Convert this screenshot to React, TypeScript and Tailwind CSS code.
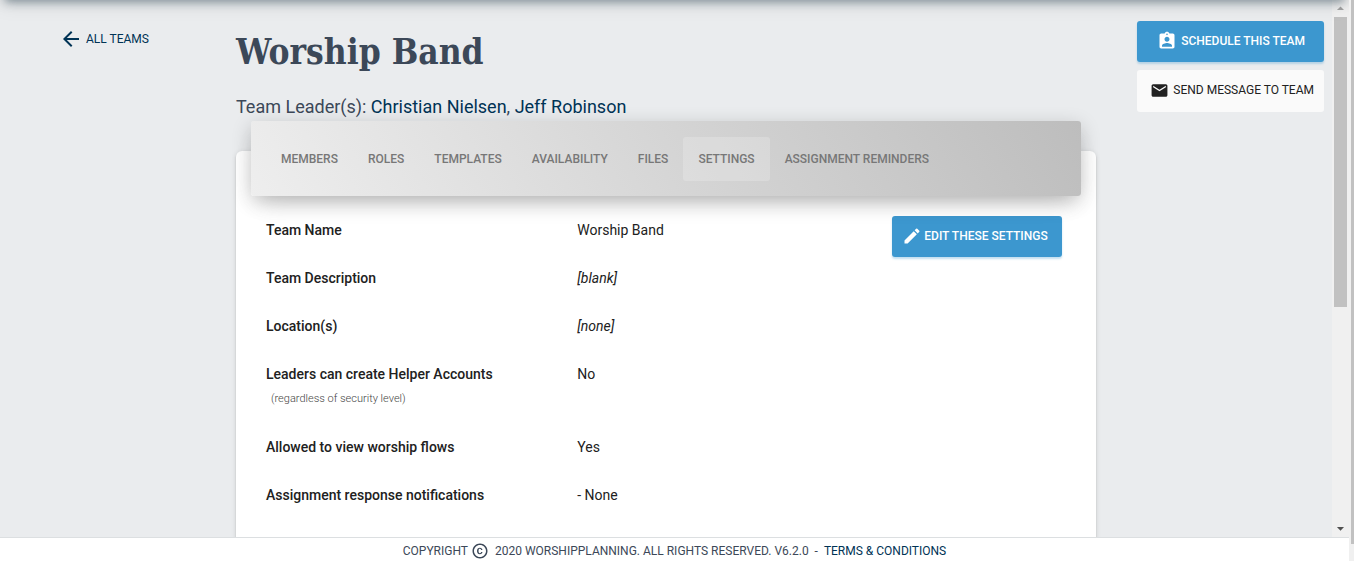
import React from 'react';
import {
  MdArrowBack,
  MdArrowDropDown,
  MdArrowDropUp,
  MdAssignmentInd,
  MdCopyright,
  MdCreate,
  MdEmail,
} from 'react-icons/md';

interface Setting {
  label: string;
  value: string;
  note?: string;
  isEmpty?: boolean;
}

const tabs = ['Members', 'Roles', 'Templates', 'Availability', 'Files', 'Settings', 'Assignment Reminders'];

const settings: Setting[] = [
  { label: 'Team Name', value: 'Worship Band' },
  { label: 'Team Description', value: '[blank]', isEmpty: true },
  { label: 'Location(s)', value: '[none]', isEmpty: true },
  { label: 'Leaders can create Helper Accounts', value: 'No', note: '(regardless of security level)' },
  { label: 'Allowed to view worship flows', value: 'Yes' },
  { label: 'Assignment response notifications', value: '- None' },
];

function TeamTabs({ active }: { active: string }) {
  return (
    <nav className="relative mx-[15px] -mt-[30px] mb-[10px] flex rounded-[3px] bg-linear-[60deg,#eeeeee,#bdbdbd] px-[15px] pt-4 pb-[15px] shadow-[0_5px_20px_0_rgba(0,0,0,0.2),0_13px_24px_-11px_rgba(100,100,100,0.3)]">
      {tabs.map(tab => (
        <a
          key={tab}
          href="#"
          className={`rounded-[3px] px-[15px] text-xs leading-[44px] font-medium whitespace-nowrap text-[#777777] uppercase ${
            tab === active ? 'bg-white/20' : ''
          }`}
        >
          {tab}
        </a>
      ))}
    </nav>
  );
}

function SettingRow({ label, value, note, isEmpty }: Setting) {
  return (
    <div className="grid grid-cols-2 py-3 text-sm leading-6 text-[#212121]">
      <dt className="px-[15px] font-medium whitespace-nowrap">
        {label}
        {note && <small className="block pl-[5px] text-[11px] leading-[25px] font-light text-[#444444]">{note}</small>}
      </dt>
      <dd className={`px-[15px] ${isEmpty ? 'italic' : ''}`}>{value}</dd>
    </div>
  );
}

function ScrollTrack() {
  return (
    <div className="flex w-[17px] shrink-0 flex-col items-center bg-[#f0f0f0]" aria-hidden="true">
      <MdArrowDropUp className="h-[17px] w-[17px] shrink-0 text-[#a3a3a3]" />
      <div className="h-[54%] w-[13px] bg-[#c1c1c1]" />
      <MdArrowDropDown className="mt-auto h-[17px] w-[17px] shrink-0 text-[#505050]" />
    </div>
  );
}

export default function App() {
  return (
    <div className="flex h-screen overflow-hidden bg-[#f0f0f0] font-['Roboto',sans-serif]">
      <div className="flex min-w-0 flex-1 flex-col">
        <div className="relative flex min-h-0 flex-1 overflow-hidden">
          {/* shadow cast by the site header */}
          <div className="absolute inset-x-0 -top-10 h-10 shadow-[0_4px_20px_0_rgba(0,0,0,0.1),0_7px_10px_-5px_rgba(60,85,100,0.55)]" />

          <main className="grid min-w-0 flex-1 grid-cols-[1fr_4fr_1fr] items-start bg-[#eaecee]">
            <div className="pt-[27px] pl-[59px]">
              <a href="#" className="flex items-center gap-[3px] text-xs leading-6 whitespace-nowrap text-[#003355] uppercase">
                <MdArrowBack className="h-6 w-6" />
                All Teams
              </a>
            </div>

            <div className="px-[14px]">
              <h1 className="pt-[31px] font-['Roboto_Slab','DejaVu_Serif_Condensed','DejaVu_Serif',serif] text-[35px] leading-[42px] font-bold whitespace-nowrap text-[#3c4858]">
                Worship Band
              </h1>
              <p className="mt-5 text-lg leading-7 text-[#3c4858]">
                Team Leader(s):{' '}
                <a href="#" className="text-[#003355]">Christian Nielsen</a>,{' '}
                <a href="#" className="text-[#003355]">Jeff Robinson</a>
              </p>

              <section className="mt-[30px] flow-root rounded-md bg-white pb-8 shadow-[0_2px_2px_0_rgba(0,0,0,0.14),0_1px_5px_0_rgba(0,0,0,0.12)]">
                <TeamTabs active="Settings" />
                <div className="flex items-start px-[15px]">
                  <dl className="w-3/4">
                    {settings.map(setting => (
                      <SettingRow key={setting.label} {...setting} />
                    ))}
                  </dl>
                  <div className="flex w-1/4 justify-end pt-[10px] pr-[19px]">
                    <button
                      type="button"
                      className="flex h-[41px] w-[170px] items-center justify-center gap-[2px] rounded-[3px] bg-[#3c97cf] pr-1 pb-[2px] text-xs font-medium whitespace-nowrap text-white uppercase shadow-[0_2px_2px_0_rgba(60,151,207,0.3)]"
                    >
                      <MdCreate className="h-5 w-5" />
                      Edit These Settings
                    </button>
                  </div>
                </div>
              </section>
            </div>

            <div className="flex flex-col gap-2 pt-[21px] pr-2 pl-[27px]">
              <button
                type="button"
                className="flex h-[41px] items-center justify-end gap-1 rounded-[3px] bg-[#3c97cf] pr-[19px] pb-[2px] text-xs font-medium whitespace-nowrap text-white uppercase shadow-[0_2px_2px_0_rgba(60,151,207,0.3)]"
              >
                <MdAssignmentInd className="h-5 w-5" />
                Schedule This Team
              </button>
              <button
                type="button"
                className="flex h-[42px] items-center justify-end gap-1 rounded-[3px] bg-[#fafafa] pr-[10px] pb-[2px] text-xs whitespace-nowrap text-[#212121] uppercase"
              >
                <MdEmail className="h-[19px] w-[19px]" />
                Send Message To Team
              </button>
            </div>
          </main>
          <ScrollTrack />
        </div>

        <footer className="flex h-6 shrink-0 items-center justify-center border-t border-[#dcdfe1] bg-white pt-[2px] text-xs whitespace-pre text-[#3c4858] uppercase">
          Copyright
          <MdCopyright className="mr-[6px] ml-[3px] h-[18px] w-[18px]" />
          2020 WorshipPlanning. All rights reserved. v6.2.0{'  -  '}
          <a href="#" className="text-[#003355]">Terms &amp; Conditions</a>
        </footer>
      </div>

      {/* window scrollbar */}
      <div className="w-[5px] shrink-0 pl-[2px]" aria-hidden="true">
        <div className="h-[97%] bg-[#c1c1c1]" />
      </div>
    </div>
  );
}
